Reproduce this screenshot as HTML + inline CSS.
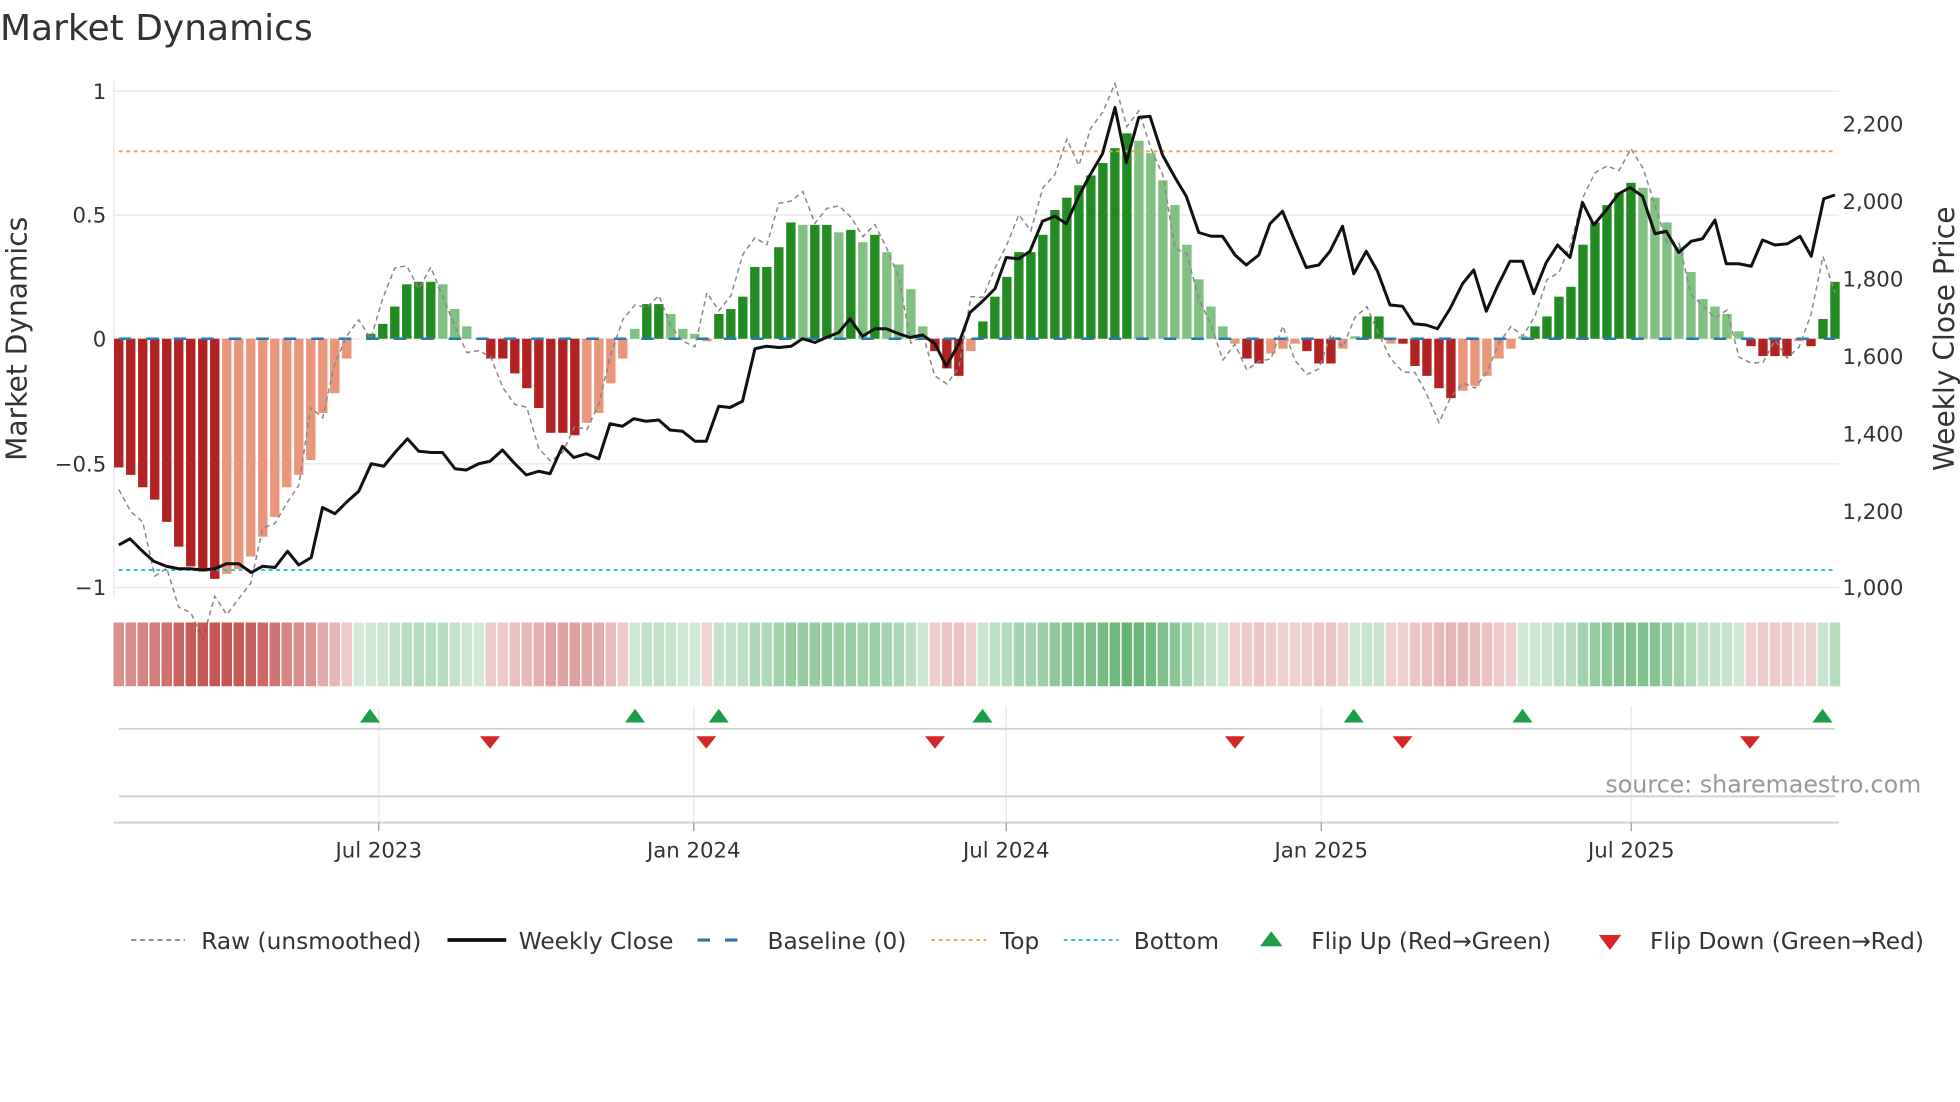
<!DOCTYPE html>
<html><head><meta charset="utf-8"><style>
html,body{margin:0;padding:0;background:#fff;width:1960px;height:1102px;overflow:hidden}
svg text{font-family:"DejaVu Sans","Liberation Sans",sans-serif;fill:#333}
</style></head><body>
<svg id="s" width="1960" height="1102" viewBox="0 0 1568 881.6" xmlns="http://www.w3.org/2000/svg">
<text x="0" y="32" font-size="28.8">Market Dynamics</text>
<g stroke="#ececec" stroke-width="1.2">
<line x1="91" y1="73" x2="1471" y2="73"/><line x1="91" y1="172" x2="1471" y2="172"/>
<line x1="91" y1="271" x2="1471" y2="271"/><line x1="91" y1="371" x2="1471" y2="371"/>
<line x1="91" y1="470" x2="1471" y2="470"/>
<line x1="91" y1="65" x2="91" y2="478"/>
</g>
<g font-size="17" text-anchor="end">
<text x="85" y="79">1</text><text x="85" y="178">0.5</text><text x="85" y="277">0</text><text x="85" y="377">−0.5</text><text x="85" y="476">−1</text>
</g>
<g font-size="17">
<text x="1474" y="105">2,200</text><text x="1474" y="167">2,000</text><text x="1474" y="229">1,800</text><text x="1474" y="291">1,600</text><text x="1474" y="353">1,400</text><text x="1474" y="415">1,200</text><text x="1474" y="476">1,000</text>
</g>
<text font-size="22.5" transform="translate(21,271) rotate(-90)" text-anchor="middle">Market Dynamics</text>
<text font-size="22.5" transform="translate(1563,271) rotate(-90)" text-anchor="middle">Weekly Close Price</text>
<g id="bars"></g>
<line x1="95" y1="121" x2="1468" y2="121" stroke="#f0a050" stroke-width="1.5" stroke-dasharray="3,3"/>
<line x1="95" y1="456" x2="1468" y2="456" stroke="#22c0d8" stroke-width="1.5" stroke-dasharray="3,3"/>
<line x1="95" y1="271" x2="1468" y2="271" stroke="#2a77b4" stroke-width="2" stroke-dasharray="10,12"/>
<g id="lines"></g>
<g id="strip"></g>
<g stroke="#e8e8e8" stroke-width="1">
<line x1="303" y1="565" x2="303" y2="658"/><line x1="555" y1="565" x2="555" y2="658"/><line x1="805" y1="565" x2="805" y2="658"/><line x1="1057" y1="565" x2="1057" y2="658"/><line x1="1305" y1="565" x2="1305" y2="658"/>
</g>
<line x1="95" y1="583" x2="1468" y2="583" stroke="#d0d0d0" stroke-width="1.5"/>
<line x1="95" y1="637" x2="1468" y2="637" stroke="#d0d0d0" stroke-width="1.5"/>
<line x1="91" y1="658" x2="1471" y2="658" stroke="#d0d0d0" stroke-width="1.5"/>
<g stroke="#999" stroke-width="1"><line x1="303" y1="658" x2="303" y2="665"/><line x1="555" y1="658" x2="555" y2="665"/><line x1="805" y1="658" x2="805" y2="665"/><line x1="1057" y1="658" x2="1057" y2="665"/><line x1="1305" y1="658" x2="1305" y2="665"/></g>
<g font-size="17" text-anchor="middle">
<text x="303" y="686">Jul 2023</text><text x="555" y="686">Jan 2024</text><text x="805" y="686">Jul 2024</text><text x="1057" y="686">Jan 2025</text><text x="1305" y="686">Jul 2025</text>
</g>
<g id="flips"></g>
<text x="1537" y="634" font-size="19" text-anchor="end" style="fill:#999">source: sharemaestro.com</text>
<g font-size="18.6">
<line x1="105" y1="752" x2="148" y2="752" stroke="#888" stroke-width="1.5" stroke-dasharray="4,3"/>
<text x="161" y="759">Raw (unsmoothed)</text>
<line x1="358" y1="752" x2="405" y2="752" stroke="#111" stroke-width="3"/>
<text x="415" y="759">Weekly Close</text>
<line x1="558" y1="752" x2="602" y2="752" stroke="#2a77b4" stroke-width="2.5" stroke-dasharray="10,12"/>
<text x="614" y="759">Baseline (0)</text>
<line x1="745" y1="752" x2="789" y2="752" stroke="#f0a050" stroke-width="1.5" stroke-dasharray="3,3"/>
<text x="800" y="759">Top</text>
<line x1="851" y1="752" x2="895" y2="752" stroke="#22c0d8" stroke-width="1.5" stroke-dasharray="3,3"/>
<text x="907" y="759">Bottom</text>
<polygon points="1008,757 1026,757 1017,745" fill="#1a9e4a"/>
<text x="1049" y="759">Flip Up (Red→Green)</text>
<polygon points="1279,748 1297,748 1288,760" fill="#d62728"/>
<text x="1320" y="759">Flip Down (Green→Red)</text>
</g>
</svg>
<script>
var V=[-0.52,-0.55,-0.6,-0.65,-0.74,-0.84,-0.92,-0.94,-0.97,-0.95,-0.93,-0.88,-0.8,-0.72,-0.6,-0.55,-0.49,-0.3,-0.22,-0.08,0,0.02,
0.06,0.13,0.22,0.23,0.23,0.22,0.12,0.05,0.0,
-0.08,-0.08,-0.14,-0.2,-0.28,-0.38,-0.38,-0.39,-0.34,-0.3,-0.18,-0.08,
0.04,0.14,0.14,0.1,0.04,0.02,-0.01,
0.1,0.12,0.17,0.29,0.29,0.37,0.47,0.46,0.46,0.46,0.43,0.44,0.39,0.42,0.35,0.3,0.2,0.05,
-0.05,-0.12,-0.15,-0.05,
0.07,0.17,0.25,0.35,0.35,0.42,0.52,0.57,0.62,0.66,0.71,0.77,0.83,0.8,0.75,0.64,0.54,0.38,0.24,0.13,0.05,
-0.02,-0.08,-0.1,-0.06,-0.04,-0.02,-0.05,-0.1,-0.1,-0.04,
0.01,0.09,0.09,-0.02,-0.02,-0.11,-0.15,-0.2,-0.24,-0.21,-0.19,-0.15,-0.08,-0.04,
0.01,0.05,0.09,0.17,0.21,0.38,0.47,0.54,0.59,0.63,0.61,0.57,0.47,0.37,0.27,0.16,0.13,0.1,0.03,
-0.03,-0.07,-0.07,-0.07,-0.01,-0.03,0.08,0.23];
var P=[[95,436],[104,431],[114,441],[123,449],[133,453],[143,455],[152,455],[162,456],[172,455],[181,451],[191,451],[201,458],[210,453],[220,454],[230,441],[239,452],[249,446],[258,406],[268,411],[278,401],[287,393],[297,371],[307,373],[316,362],[326,351],[335,361],[345,362],[354,362],[364,375],[373,376],[383,371],[392,369],[402,360],[411,370],[421,380],[431,377],[440,379],[450,357],[459,366],[469,363],[479,367],[488,339],[498,341],[507,335],[517,337],[527,336],[536,344],[546,345],[556,353],[565,353],[575,325],[584,326],[594,321],[604,279],[613,277],[623,278],[633,277],[642,271],[652,274],[661,270],[671,266],[680,255],[690,269],[700,263],[709,263],[719,267],[728,270],[738,268],[748,275],[757,293],[767,275],[776,250],[786,241],[796,231],[805,206],[815,207],[824,201],[834,177],[844,173],[853,179],[863,157],[872,140],[882,123],[892,86],[901,130],[911,94],[920,93],[930,124],[940,142],[949,157],[959,186],[969,189],[978,189],[988,204],[997,212],[1007,204],[1016,179],[1026,169],[1036,193],[1045,214],[1055,212],[1064,201],[1074,181],[1083,219],[1093,201],[1102,217],[1112,244],[1122,245],[1131,259],[1141,260],[1150,263],[1160,247],[1170,227],[1179,216],[1189,249],[1198,229],[1208,209],[1218,209],[1227,235],[1237,210],[1246,196],[1256,206],[1266,162],[1275,180],[1285,168],[1295,155],[1304,150],[1314,157],[1324,187],[1333,185],[1343,202],[1353,193],[1362,191],[1372,176],[1381,211],[1391,211],[1401,213],[1410,192],[1420,196],[1430,195],[1440,189],[1449,205],[1459,159],[1468,156]];
var N=V.length,x0=95,x1=1468,st=(x1-x0)/(N-1),bw=st*0.78,b='',s='',r=[];
for(var i=0;i<N;i++){var v=V[i],x=x0+i*st,pv=i?V[i-1]:0,dark=Math.abs(v)>=Math.abs(pv)-0.001;
 var c=v>=0?(dark?'#228b22':'#80c080'):(dark?'#b22222':'#e9967a');
 var y=271-v*198,h=Math.abs(v)*198;
 if(h>0.3)b+='<rect x="'+(x-bw/2)+'" y="'+Math.min(y,271)+'" width="'+bw+'" height="'+h+'" fill="'+c+'"/>';
 var a=0.22+0.65*Math.min(1,Math.abs(v)/0.95);
 var sc=v>=0?'rgba(60,160,80,'+a+')':'rgba(190,60,60,'+a+')';
 s+='<rect x="'+(x-st/2+0.6)+'" y="498" width="'+(st-1.2)+'" height="51" fill="'+sc+'"/>';
 var nv=i<N-1?V[i+1]:v; var raw=nv*1.18+0.05*Math.sin(i*1.7)+0.04*Math.cos(i*3.1);
 r.push(x.toFixed(1)+','+(271-raw*198).toFixed(1));}
document.getElementById('bars').innerHTML=b;
document.getElementById('strip').innerHTML=s;
var pl=P.map(function(p){return p[0]+','+p[1]}).join(' ');
document.getElementById('lines').innerHTML='<polyline points="'+r.join(' ')+'" fill="none" stroke="#888" stroke-width="1.2" stroke-dasharray="4,3"/><polyline points="'+pl+'" fill="none" stroke="#111" stroke-width="2.4" stroke-linejoin="round"/>';
var f='';[296,508,575,786,1083,1218,1458].forEach(function(x){f+='<polygon points="'+(x-8)+',578 '+(x+8)+',578 '+x+',567" fill="#1a9e4a"/>'});
[392,565,748,988,1122,1400].forEach(function(x){f+='<polygon points="'+(x-8)+',589 '+(x+8)+',589 '+x+',599" fill="#d62728"/>'});
document.getElementById('flips').innerHTML=f;
</script>
</body></html>
